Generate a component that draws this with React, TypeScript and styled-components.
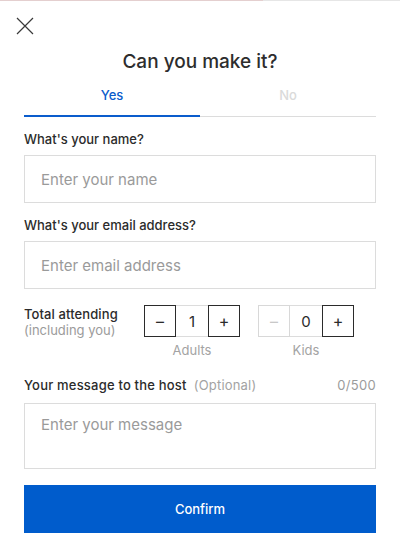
import React, { useState } from "react";
import styled, { createGlobalStyle } from "styled-components";

const Global = createGlobalStyle`
  html, body { margin: 0; padding: 0; background: #fff; }
  body { font-family: "Inter", "Liberation Sans", sans-serif; color: #2b2b2b; }
  * { box-sizing: border-box; }
`;

const Page = styled.div`
  width: 400px;
  height: 557px;
  background: #fff;
  display: flex;
  flex-direction: column;
  overflow: hidden;
`;

const TopLine = styled.div`
  height: 1px;
  background: linear-gradient(to right, #e4cfcf 0, #e4cfcf 263px, #e6e6e6 263px, #e6e6e6 100%);
`;

const Header = styled.div`
  padding: 16px 16px 0;
  height: 34px;
`;

const CloseButton = styled.button`
  width: 16px;
  height: 16px;
  padding: 0;
  border: 0;
  background: none;
  display: block;
  cursor: pointer;
`;

const Title = styled.h1`
  margin: 14px 0 0;
  text-align: center;
  font-size: 19px;
  font-weight: 500;
  color: #2d2d2d;
  line-height: 26px;
`;

const Body = styled.div`
  padding: 0 24px;
  display: flex;
  flex-direction: column;
`;

const Tabs = styled.div`
  display: flex;
  margin-top: 11px;
  border-bottom: 1px solid #dcdcdc;
`;

const Tab = styled.button<{ $active?: boolean }>`
  flex: 1;
  border: 0;
  background: none;
  padding: 0 0 12px;
  font-family: inherit;
  font-size: 13px;
  font-weight: 500;
  line-height: 18px;
  color: ${(p) => (p.$active ? "#0a5ccc" : "#dadada")};
  box-shadow: ${(p) => (p.$active ? "inset 0 -1px 0 #0a5ccc" : "none")};
  margin-bottom: -1px;
  border-bottom: 1px solid ${(p) => (p.$active ? "#0a5ccc" : "transparent")};
`;

const Label = styled.label`
  display: block;
  font-size: 13px;
  font-weight: 500;
  line-height: 18px;
  color: #2b2b2b;
`;

const Field = styled.div<{ $mt: number }>`
  margin-top: ${(p) => p.$mt}px;
  display: flex;
  flex-direction: column;
  gap: 7px;
`;

const Input = styled.input`
  height: 48px;
  border: 1px solid #dcdcdc;
  padding: 0 16px;
  font-family: inherit;
  font-size: 15px;
  color: #2b2b2b;
  outline: none;
  &::placeholder { color: #9a9a9a; }
`;

const AttendRow = styled.div`
  margin-top: 16px;
  display: flex;
  align-items: flex-start;
`;

const AttendLabel = styled.div`
  width: 120px;
  padding-top: 1px;
  line-height: 16px;
`;

const AttendTitle = styled.div`
  font-size: 13px;
  font-weight: 500;
  color: #2b2b2b;
  letter-spacing: 0.1px;
`;

const AttendSub = styled.div`
  font-size: 13px;
  color: #9b9b9b;
`;

const Counters = styled.div`
  display: flex;
  gap: 18px;
`;

const Counter = styled.div`
  display: flex;
  flex-direction: column;
  align-items: center;
`;

const Stepper = styled.div`
  display: flex;
  height: 32px;
`;

const StepBtn = styled.button<{ $disabled?: boolean }>`
  width: 32px;
  height: 32px;
  border: 1px solid ${(p) => (p.$disabled ? "#d8d8d8" : "#2b2b2b")};
  background: #fff;
  color: ${(p) => (p.$disabled ? "#c8c8c8" : "#2b2b2b")};
  font-family: inherit;
  font-size: 16px;
  padding: 0;
  display: flex;
  align-items: center;
  justify-content: center;
`;

const StepValue = styled.div`
  width: 32px;
  height: 32px;
  border-top: 1px solid #dcdcdc;
  border-bottom: 1px solid #dcdcdc;
  display: flex;
  align-items: center;
  justify-content: center;
  font-size: 15px;
  color: #2b2b2b;
`;

const CounterCaption = styled.div`
  margin-top: 5px;
  font-size: 13px;
  color: #a3a3a3;
  line-height: 16px;
`;

const MessageHead = styled.div`
  margin-top: 18px;
  display: flex;
  align-items: baseline;
  font-size: 13px;
  line-height: 18px;
`;

const MessageLabel = styled.span`
  font-weight: 500;
  color: #2b2b2b;
  letter-spacing: 0.2px;
`;

const Optional = styled.span`
  margin-left: 7px;
  color: #a3a3a3;
  flex: 1;
  letter-spacing: 0.2px;
`;

const CharCount = styled.span`
  color: #9b9b9b;
  letter-spacing: 0.3px;
`;

const TextArea = styled.textarea`
  margin-top: 9px;
  height: 66px;
  border: 1px solid #dcdcdc;
  padding: 11px 16px;
  font-family: inherit;
  font-size: 15px;
  resize: none;
  outline: none;
  &::placeholder { color: #9a9a9a; }
`;

const Confirm = styled.button`
  margin-top: 16px;
  height: 48px;
  border: 0;
  background: #005ccc;
  color: #fff;
  font-family: inherit;
  font-size: 13px;
  font-weight: 500;
`;

const CloseIcon = () => (
  <svg width="18" height="18" viewBox="0 0 18 18" fill="none">
    <path d="M1 1L17 17M17 1L1 17" stroke="#3a3a3a" strokeWidth="1.2" />
  </svg>
);

export default function App() {
  const [tab, setTab] = useState<"yes" | "no">("yes");
  const [adults, setAdults] = useState(1);
  const [kids, setKids] = useState(0);
  return (
    <Page>
      <Global />
      <TopLine />
      <Header>
        <CloseButton aria-label="Close">
          <CloseIcon />
        </CloseButton>
      </Header>
      <Title>Can you make it?</Title>
      <Body>
        <Tabs>
          <Tab $active={tab === "yes"} onClick={() => setTab("yes")}>Yes</Tab>
          <Tab $active={tab === "no"} onClick={() => setTab("no")}>No</Tab>
        </Tabs>
        <Field $mt={13}>
          <Label>What's your name?</Label>
          <Input placeholder="Enter your name" />
        </Field>
        <Field $mt={13}>
          <Label>What's your email address?</Label>
          <Input placeholder="Enter email address" />
        </Field>
        <AttendRow>
          <AttendLabel>
            <AttendTitle>Total attending</AttendTitle>
            <AttendSub>(including you)</AttendSub>
          </AttendLabel>
          <Counters>
            <Counter>
              <Stepper>
                <StepBtn onClick={() => setAdults(Math.max(1, adults - 1))}>–</StepBtn>
                <StepValue>{adults}</StepValue>
                <StepBtn onClick={() => setAdults(adults + 1)}>+</StepBtn>
              </Stepper>
              <CounterCaption>Adults</CounterCaption>
            </Counter>
            <Counter>
              <Stepper>
                <StepBtn $disabled={kids === 0} onClick={() => setKids(Math.max(0, kids - 1))}>–</StepBtn>
                <StepValue>{kids}</StepValue>
                <StepBtn onClick={() => setKids(kids + 1)}>+</StepBtn>
              </Stepper>
              <CounterCaption>Kids</CounterCaption>
            </Counter>
          </Counters>
        </AttendRow>
        <MessageHead>
          <MessageLabel>Your message to the host</MessageLabel>
          <Optional>(Optional)</Optional>
          <CharCount>0/500</CharCount>
        </MessageHead>
        <TextArea placeholder="Enter your message" />
        <Confirm>Confirm</Confirm>
      </Body>
    </Page>
  );
}
